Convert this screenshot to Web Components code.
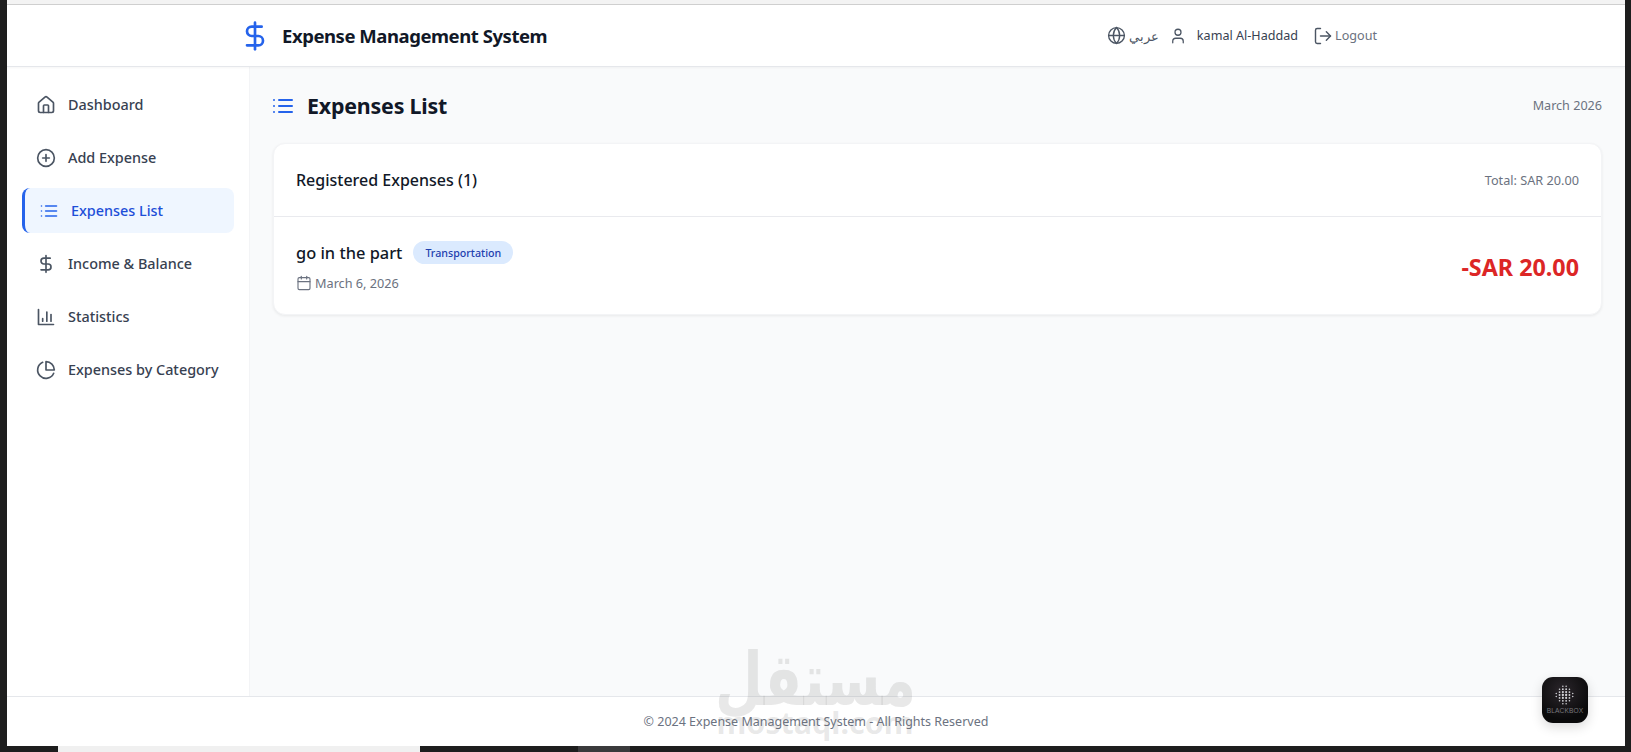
<!DOCTYPE html>
<html>
<head>
<meta charset="utf-8">
<title>Expense Management System</title>
<style>
  html, body { margin: 0; height: 100%; background: #1e1e1e; overflow: hidden; }
  body { font-family: "Noto Sans", "Liberation Sans", sans-serif; }
</style>
</head>
<body>
<app-shell>
  <app-header></app-header>
  <div slot="side">
    <nav-item icon="home" label="Dashboard"></nav-item>
    <nav-item icon="plus" label="Add Expense"></nav-item>
    <nav-item icon="list" label="Expenses List" active></nav-item>
    <nav-item icon="dollar" label="Income &amp; Balance"></nav-item>
    <nav-item icon="chart" label="Statistics"></nav-item>
    <nav-item icon="pie" label="Expenses by Category"></nav-item>
  </div>
  <expenses-page slot="main"></expenses-page>
  <app-footer slot="footer"></app-footer>
</app-shell>

<script>
// lucide style icons, all on a 24 box
const ICONS = {
  dollar: '<line x1="12" y1="2" x2="12" y2="22"/><path d="M17 5H9.5a3.5 3.5 0 0 0 0 7h5a3.5 3.5 0 0 1 0 7H6"/>',
  home: '<path d="M15 21v-8a1 1 0 0 0-1-1h-4a1 1 0 0 0-1 1v8"/><path d="M3 10a2 2 0 0 1 .709-1.528l7-5.999a2 2 0 0 1 2.582 0l7 5.999A2 2 0 0 1 21 10v9a2 2 0 0 1-2 2H5a2 2 0 0 1-2-2z"/>',
  plus: '<circle cx="12" cy="12" r="10"/><path d="M8 12h8"/><path d="M12 8v8"/>',
  list: '<path d="M3 12h.01"/><path d="M3 18h.01"/><path d="M3 6h.01"/><path d="M8 12h13"/><path d="M8 18h13"/><path d="M8 6h13"/>',
  chart: '<path d="M3 3v18h18"/><path d="M8 17v-3"/><path d="M13 17V6"/><path d="M18 17V9"/>',
  pie: '<path d="M21.21 15.89A10 10 0 1 1 8 2.83"/><path d="M22 12A10 10 0 0 0 12 2v10z"/>',
  globe: '<circle cx="12" cy="12" r="10"/><path d="M12 2a14.5 14.5 0 0 0 0 20 14.5 14.5 0 0 0 0-20"/><path d="M2 12h20"/>',
  user: '<path d="M19 21v-2a4 4 0 0 0-4-4H9a4 4 0 0 0-4 4v2"/><circle cx="12" cy="7" r="4"/>',
  logout: '<path d="M9 21H5a2 2 0 0 1-2-2V5a2 2 0 0 1 2-2h4"/><polyline points="16 17 21 12 16 7"/><line x1="21" y1="12" x2="9" y2="12"/>',
  calendar: '<path d="M8 2v4"/><path d="M16 2v4"/><rect width="18" height="18" x="3" y="4" rx="2"/><path d="M3 10h18"/>'
};

function icon(name, size, color, sw) {
  return `<svg width="${size}" height="${size}" viewBox="0 0 24 24" fill="none" stroke="${color}" stroke-width="${sw || 2}" stroke-linecap="round" stroke-linejoin="round" style="display:block;flex:none">${ICONS[name]}</svg>`;
}

class AppShell extends HTMLElement {
  constructor() {
    super();
    this.attachShadow({ mode: 'open' });
    this.shadowRoot.innerHTML = `
      <style>
        :host { display: block; height: 752px; position: relative; background: #1e1e1e; }
        .topstrip { height: 4px; margin-left: 7px; margin-right: 6px; background: #f3f3f3; border-bottom: 1px solid #cfcfcf; }
        .frame { margin: 0 6px 0 7px; height: 741px; display: flex; flex-direction: column; background: #fff; }
        .body { flex: 1; display: flex; min-height: 0; }
        aside { width: 243px; box-sizing: border-box; background: #fff; border-right: 1px solid #f3f4f6; padding: 15px 15px; flex: none; }
        main { flex: 1; background: #f9fafb; min-width: 0; }
        .tabs { height: 6px; display: flex; }
        .tab1 { margin-left: 58px; width: 362px; background: #f0f0f0; }
        .tab2 { margin-left: 158px; width: 52px; background: #3a3a3c; }
      </style>
      <div class="topstrip"></div>
      <div class="frame">
        <slot></slot>
        <div class="body">
          <aside><slot name="side"></slot></aside>
          <main><slot name="main"></slot></main>
        </div>
        <slot name="footer"></slot>
      </div>
      <div class="tabs"><div class="tab1"></div><div class="tab2"></div></div>
      <watermark-logo></watermark-logo>
      <blackbox-badge></blackbox-badge>
    `;
  }
}

class AppHeader extends HTMLElement {
  constructor() {
    super();
    this.attachShadow({ mode: 'open' });
    this.shadowRoot.innerHTML = `
      <style>
        :host { display: flex; align-items: center; justify-content: space-between; height: 62px; box-sizing: border-box;
          padding: 0 248px 0 232px; background: #fff; border-bottom: 1px solid #e5e7eb; box-shadow: 0 1px 2px rgba(0,0,0,.04); position: relative; z-index: 1; flex: none; }
        .brand { display: flex; align-items: center; gap: 11px; }
        h1 { margin: 0; font-size: 18.5px; font-weight: 700; color: #111827; white-space: nowrap; letter-spacing: -.45px; }
        .tools { display: flex; align-items: center; font-size: 12.6px; white-space: nowrap; }
        .lang { display: flex; align-items: center; gap: 3px; color: #4b5563; font-size: 13px; }
        .who { display: flex; align-items: center; gap: 10px; color: #374151; margin-left: 10px; }
        .out { display: flex; align-items: center; gap: 2px; color: #6b7280; margin-left: 15px; }
      </style>
      <div class="brand">${icon('dollar', 32, '#2563eb')}<h1>Expense Management System</h1></div>
      <div class="tools">
        <div class="lang">${icon('globe', 19, '#4b5563', 1.7)}<span>عربي</span></div>
        <div class="who">${icon('user', 18, '#4b5563', 1.7)}<span>kamal Al-Haddad</span></div>
        <div class="out">${icon('logout', 20, '#4b5563', 1.7)}<span>Logout</span></div>
      </div>
    `;
  }
}

class NavItem extends HTMLElement {
  constructor() {
    super();
    this.attachShadow({ mode: 'open' });
    const active = this.hasAttribute('active');
    const color = active ? '#2563eb' : '#4b5563';
    this.shadowRoot.innerHTML = `
      <style>
        :host { display: flex; align-items: center; gap: 12px; height: 45px; margin-bottom: 8px; box-sizing: border-box;
          padding-left: 14px; border-radius: 8px; font-size: 14.4px; font-weight: 500; color: #374151; white-space: nowrap; }
        :host([active]) { background: #eff6ff; color: #1d4ed8; border-left: 3px solid #2563eb; }
      </style>
      ${icon(this.getAttribute('icon'), 20, color, 2)}<span>${this.getAttribute('label').replace('&', '&amp;')}</span>
    `;
  }
}

class ExpensesPage extends HTMLElement {
  constructor() {
    super();
    this.attachShadow({ mode: 'open' });
    this.shadowRoot.innerHTML = `
      <style>
        :host { display: block; padding: 16px 23px 0 23px; }
        .top { display: flex; align-items: center; justify-content: space-between; height: 45px; margin-bottom: 15px; }
        .title { display: flex; align-items: center; gap: 12px; margin-left: -2px; }
        h2 { margin: 0; font-size: 21.4px; font-weight: 700; color: #111827; letter-spacing: -.2px; }
        .month { font-size: 12.6px; color: #6b7280; }
      </style>
      <div class="top">
        <div class="title">${icon('list', 24, '#2563eb', 2)}<h2>Expenses List</h2></div>
        <div class="month">March 2026</div>
      </div>
      <expense-card count="1" total="SAR 20.00">
        <expense-row name="go in the part" category="Transportation" date="March 6, 2026" amount="-SAR 20.00"></expense-row>
      </expense-card>
    `;
  }
}

class ExpenseCard extends HTMLElement {
  constructor() {
    super();
    this.attachShadow({ mode: 'open' });
    this.shadowRoot.innerHTML = `
      <style>
        :host { display: block; background: #fff; border: 1px solid #f3f4f6; border-radius: 12px; box-shadow: 0 1px 3px rgba(0,0,0,.07); }
        .head { display: flex; align-items: center; justify-content: space-between; height: 73px; padding: 0 22px; border-bottom: 1px solid #e9eaee; box-sizing: border-box; }
        h3 { margin: 0; font-size: 16px; font-weight: 500; color: #111827; }
        .total { font-size: 12.7px; color: #6b7280; }
      </style>
      <div class="head">
        <h3>Registered Expenses (${this.getAttribute('count')})</h3>
        <div class="total">Total: ${this.getAttribute('total')}</div>
      </div>
      <slot></slot>
    `;
  }
}

class ExpenseRow extends HTMLElement {
  constructor() {
    super();
    this.attachShadow({ mode: 'open' });
    this.shadowRoot.innerHTML = `
      <style>
        :host { display: flex; align-items: center; justify-content: space-between; height: 97px; padding: 2px 22px 0; box-sizing: border-box; }
        .line { display: flex; align-items: center; gap: 11px; }
        .name { font-size: 16.4px; font-weight: 500; color: #111827; }
        .badge { display: flex; align-items: center; height: 23px; padding: 0 12px; border-radius: 12px; background: #dbeafe; color: #1e40af; font-size: 10.7px; font-weight: 500; }
        .date { display: flex; align-items: center; gap: 3px; margin-top: 10px; font-size: 12.7px; color: #6b7280; }
        .amount { font-size: 23.3px; font-weight: 700; color: #dc2626; margin-top: 1px; }
      </style>
      <div>
        <div class="line"><span class="name">${this.getAttribute('name')}</span><span class="badge">${this.getAttribute('category')}</span></div>
        <div class="date">${icon('calendar', 16, '#6b7280', 1.7)}<span>${this.getAttribute('date')}</span></div>
      </div>
      <div class="amount">${this.getAttribute('amount')}</div>
    `;
  }
}

class AppFooter extends HTMLElement {
  constructor() {
    super();
    this.attachShadow({ mode: 'open' });
    this.shadowRoot.innerHTML = `
      <style>
        :host { display: flex; align-items: center; justify-content: center; height: 50px; box-sizing: border-box; flex: none;
          background: #fff; border-top: 1px solid #e5e7eb; font-size: 12.5px; color: #6b7280; }
      </style>
      <span>© 2024 Expense Management System - All Rights Reserved</span>
    `;
  }
}

// site watermark, sits over the page
class WatermarkLogo extends HTMLElement {
  constructor() {
    super();
    this.attachShadow({ mode: 'open' });
    this.shadowRoot.innerHTML = `
      <style>
        :host { position: absolute; left: 715px; top: 638px; width: 200px; height: 104px; pointer-events: none; color: rgba(120,120,120,.17); text-align: center; white-space: nowrap; }
        .ar { font: 700 55px/62px "DejaVu Sans", sans-serif; transform: scaleY(1.33); transform-origin: top; }
        .en { font: 700 30.5px/30px "Noto Sans", sans-serif; margin-top: 7px; }
      </style>
      <div class="ar">مستقل</div>
      <div class="en">mostaql.com</div>
    `;
  }
}

// floating badge bottom right
class BlackboxBadge extends HTMLElement {
  constructor() {
    super();
    this.attachShadow({ mode: 'open' });
    let dots = '';
    // columns of the little dot ball, taller and brighter toward the middle
    const cols = [2, 5, 7, 7, 5, 2];
    cols.forEach((n, c) => {
      for (let r = 0; r < n; r++) {
        const x = 22.5 + (c - 2.5) * 3.3;
        const y = 18 + (r - (n - 1) / 2) * 2.9;
        const d = Math.hypot(c - 2.5, (r - (n - 1) / 2) * .8);
        dots += `<circle cx="${x}" cy="${y}" r="${Math.max(.5, 1.25 - d * .2)}"/>`;
      }
    });
    this.shadowRoot.innerHTML = `
      <style>
        :host { position: absolute; left: 1542px; top: 677px; width: 46px; height: 46px; border-radius: 11px; background: radial-gradient(circle at 45% 30%, #2b262b, #0a0a0b 70%); box-shadow: 0 4px 12px rgba(0,0,0,.15); overflow: hidden; }
        svg { display: block; position: absolute; left: 0; top: 0; }
        span { position: absolute; left: 0; right: 0; top: 29px; text-align: center; font: 6.6px/9px "Liberation Sans", sans-serif; letter-spacing: .15px; color: #77777c; }
      </style>
      <svg width="46" height="46" viewBox="0 0 46 46" fill="#d4d4d8">${dots}</svg>
      <span>BLACKBOX</span>
    `;
  }
}

customElements.define('app-shell', AppShell);
customElements.define('app-header', AppHeader);
customElements.define('nav-item', NavItem);
customElements.define('expenses-page', ExpensesPage);
customElements.define('expense-card', ExpenseCard);
customElements.define('expense-row', ExpenseRow);
customElements.define('app-footer', AppFooter);
customElements.define('watermark-logo', WatermarkLogo);
customElements.define('blackbox-badge', BlackboxBadge);
</script>
</body>
</html>
